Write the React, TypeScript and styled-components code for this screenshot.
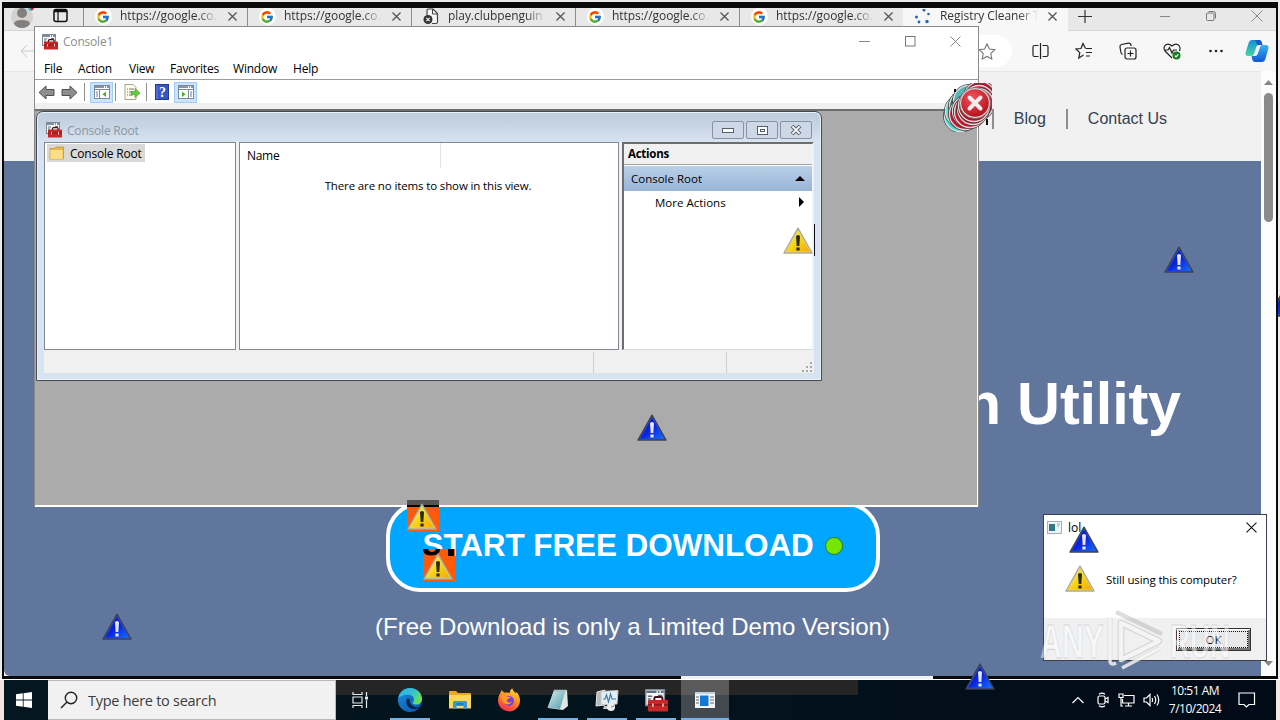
import React from 'react';
import styled, { createGlobalStyle } from 'styled-components';
import { FcGoogle } from 'react-icons/fc';

const GlobalStyle = createGlobalStyle`
  * { box-sizing: border-box; }
  body {
    margin: 0;
    overflow: hidden;
    font-family: 'Open Sans', 'Noto Sans', sans-serif;
    font-size: 11.5px;
    color: #000;
  }
  svg { display: block; flex: none; }
`;

interface PointProps {
  $x: number;
  $y: number;
}

/* ---------- icons ---------- */

const ToolboxIcon: React.FC<{ size?: number }> = ({ size = 16 }) => (
  <svg width={size} height={size} viewBox="0 0 16 16">
    <rect x="0.5" y="0.5" width="13" height="11" fill="#f4f6f8" stroke="#7c8894" />
    <path d="M1 2h12" stroke="#5c7083" strokeWidth="1.6" strokeDasharray="7 1 1 1" />
    <path d="M2 5h3M2 7h2M2 9h1M9 4.5h3" stroke="#5f6b76" />
    <path d="M6.5 8.5V6.6q0-1 1-1h3.6q1 0 1 1v1.9" fill="none" stroke="#3b1513" strokeWidth="1.3" />
    <path d="M2 8.400q0-.8.8-.8h12.400q.8 0 .8.8V15q0 .6-.6.6H2.600Q2 15.600 2 15z" fill="#c62828" />
    <path d="M2 11h14" stroke="#8b1414" />
    <path d="M5.500 10v2.400M12.500 10v2.400" stroke="#f3d6d0" />
  </svg>
);

const Warning: React.FC<{ blue?: boolean }> = ({ blue }) => (
  <svg width="32" height="30" viewBox="0 0 32 30">
    <defs>
      <linearGradient id="warnBlue" x1="0" y1="0" x2="1" y2="1">
        <stop offset="0" stopColor="#0713b8" />
        <stop offset=".5" stopColor="#0a22e0" />
        <stop offset="1" stopColor="#1272ff" />
      </linearGradient>
      <linearGradient id="warnYellow" x1="0" y1="0" x2="1" y2="1">
        <stop offset="0" stopColor="#fff27a" />
        <stop offset=".45" stopColor="#f7da1c" />
        <stop offset="1" stopColor="#f5a700" />
      </linearGradient>
    </defs>
    <path
      d="M16 2.200 30 27H2z"
      fill={blue ? '#3c4250' : '#b9b7ac'}
      stroke={blue ? '#3c4250' : '#a9a89f'}
      strokeWidth="1.4"
      strokeLinejoin="round"
    />
    <path
      d="M16 4.200 28.400 26H3.600z"
      fill={blue ? 'url(#warnBlue)' : 'url(#warnYellow)'}
      stroke={blue ? '#2b55d0' : '#ecd766'}
      strokeWidth=".7"
    />
    <path
      d="M14 10.500q0-1.500 2-1.500t2 1.500l-.7 9.500h-2.600zM14.400 21.500h3.200v3h-3.200z"
      fill={blue ? '#e6e6ff' : '#2c2a14'}
    />
  </svg>
);

const EdgeIcon: React.FC = () => (
  <svg width="24" height="24" viewBox="0 0 24 24">
    <defs>
      <linearGradient id="edgeTop" x1="0" y1="0" x2="1" y2=".5">
        <stop offset="0" stopColor="#2bb3e8" />
        <stop offset=".6" stopColor="#35c1d0" />
        <stop offset="1" stopColor="#66e05a" />
      </linearGradient>
      <linearGradient id="edgeSide" x1="0" y1="0" x2="1" y2="1">
        <stop offset="0" stopColor="#1b8fdd" />
        <stop offset="1" stopColor="#0b4fa8" />
      </linearGradient>
    </defs>
    <circle cx="12" cy="12" r="12" fill="url(#edgeSide)" />
    <path d="M.2 10.600C1.500 4 6.600 0 12 0c7 0 12 5.200 12 11 0 3.500-2.600 5.600-5.800 5.600-2.400 0-3.600-.8-3.600-1.600s1.400-1.300 1.400-3.400C16 8.700 13 6.800 9.200 6.800 5 6.800 1.600 8.600.2 10.600z" fill="url(#edgeTop)" />
    <path d="M9 10.500c-2 3.500 0 9.500 6 10.500 3 .4 5.600-.8 7.200-2.400-2 .8-4.800 1-7.200-.6C12 16.200 11 13.400 12 11.200z" fill="#06264e" />
  </svg>
);

const ExplorerIcon: React.FC = () => (
  <svg width="24" height="22" viewBox="0 0 24 22">
    <path d="M1 3q0-1 1-1h6l2 2h12q1 0 1 1v13H1z" fill="#e9a825" />
    <path d="M1 6h22v13.500H1z" fill="#ffd65c" />
    <path d="M5 20v-6.500q0-1.500 1.500-1.500h11q1.500 0 1.500 1.500V20h-3.500v-3h-7v3z" fill="#3a96d8" />
    <path d="M8.500 15h7" stroke="#1c6fb0" strokeWidth="1.5" />
  </svg>
);

const FirefoxIcon: React.FC = () => (
  <svg width="24" height="24" viewBox="0 0 24 24">
    <defs>
      <linearGradient id="fox" x1=".8" y1="0" x2=".3" y2="1">
        <stop offset="0" stopColor="#ffe23d" />
        <stop offset=".45" stopColor="#ff9020" />
        <stop offset="1" stopColor="#f4284f" />
      </linearGradient>
    </defs>
    <path d="M3 5.500C4 4 4.300 2.600 4.600 2c.8 1.200 1.700 2 2.900 2.800 1.700-.6 3.600-.5 5.200.2C12.900 3 13.800 1.200 15.300.2c.4 2.600 2.300 3.700 4 5.400 0-.6-.1-1.200-.3-1.800 2.700 2.200 4 5.500 4 8.600 0 6.300-5 11-11 11S1 18.700 1 12.600C1 10 1.800 7.300 3 5.500z" fill="url(#fox)" />
    <circle cx="12" cy="13" r="5" fill="#7b3fe0" />
    <path d="M4 7.500c2.500-1 5-.5 6.500 1.200l3 .3c-.5 1.800-2.800 1.700-3.600 2.800-.5 2.600 2.600 3.500 5 2-1.400 3.200-7.200 3.800-9.300-.5C4.500 11.500 4.200 9.500 4 7.500z" fill="#ff9a26" />
  </svg>
);

const NotepadIcon: React.FC = () => (
  <svg width="24" height="24" viewBox="0 0 24 24">
    <defs>
      <linearGradient id="pad" x1="0" y1="0" x2="1" y2="1">
        <stop offset="0" stopColor="#d7f0f2" />
        <stop offset="1" stopColor="#4f99a6" />
      </linearGradient>
    </defs>
    <path d="M8 2h13l1 16-5 4-15-2z" fill="#dfe3e3" />
    <path d="M8 2.500h11.500L14 21 1.500 19.500z" fill="url(#pad)" />
    <path d="M8 2.500h12" stroke="#9fb0b4" strokeWidth="2" strokeDasharray="1.500 1" />
  </svg>
);

const MonitorIcon: React.FC = () => (
  <svg width="24" height="24" viewBox="0 0 24 24">
    <path d="M2 4 10 2v15L1 18z" fill="#b4babd" stroke="#e6e6e6" />
    <path d="M6 3.500 23 2.500 22 16 6 17z" fill="#e6edf1" stroke="#c2c7ca" />
    <path d="M8 11h2l1.500-4 2 7 2-8 1.500 5h4" fill="none" stroke="#3c7fae" strokeWidth="1.200" />
    <path d="M9 18h7l1 3H8z" fill="#c5c9cb" />
    <circle cx="16" cy="19" r="4" fill="#ececec" />
    <path d="M16 19l3-1" stroke="#888" />
  </svg>
);

const AppWindowIcon: React.FC = () => (
  <svg width="20" height="16" viewBox="0 0 20 16">
    <rect width="20" height="16" fill="#f4f4f4" />
    <path d="M0 1h20" stroke="#bcd3e2" strokeWidth="2" />
    <rect x="5" y="3.500" width="8.500" height="10.500" fill="#1577d0" />
    <path d="M1 5h3M1 8h3M1 11h3M15 5h4M15 8h4M15 11h4" stroke="#606468" />
  </svg>
);

const CopilotIcon: React.FC = () => (
  <svg width="24" height="24" viewBox="0 0 24 24">
    <defs>
      <linearGradient id="coA" x1="0" y1="0" x2="0" y2="1">
        <stop offset="0" stopColor="#1590dc" />
        <stop offset="1" stopColor="#45d6a0" />
      </linearGradient>
      <linearGradient id="coB" x1="0" y1="0" x2="0" y2="1">
        <stop offset="0" stopColor="#38b3f2" />
        <stop offset="1" stopColor="#1257d6" />
      </linearGradient>
    </defs>
    <path d="M7 1h7q2 0 2.600 2l.8 3H14q-2 0-2.700 2L9 15q-.7 2-2.500 2H3q-3 0-2.400-3.500L3.600 4Q4.500 1 7 1z" fill="url(#coA)" />
    <path d="M14 1q2 0 2.700 2l.8 3h-5L11 3q-.5-2-2-2z" fill="#1c56c8" />
    <path d="M17 23h-7q-2 0-2.600-2l-.8-4H10q2 0 2.700-2L15 8q.7-2 2.500-2H21q3 0 2.400 3.500L20.400 20Q19.500 23 17 23z" fill="url(#coB)" />
  </svg>
);

/* ---------- desktop ---------- */

const Desktop = styled.div`
  position: relative;
  width: 1280px;
  height: 720px;
  overflow: hidden;
  background: #ececec;
`;

const Floating = styled.div<PointProps>`
  position: absolute;
  left: ${({ $x }) => $x}px;
  top: ${({ $y }) => $y}px;
`;

/* ---------- browser ---------- */

const Browser = styled.div`
  position: absolute;
  left: 2px;
  top: 2px;
  width: 1276px;
  height: 677px;
  display: flex;
  flex-direction: column;
  background: #f7f7f7;
  border: solid #0a0a0a;
  border-width: 6px 2px 3px;
`;

const TabStrip = styled.div`
  display: flex;
  height: 23px;
  background: #e8e8e8;
  border-bottom: 1px solid #d4d4d4;
  flex: none;
`;

const ProfileArea = styled.div`
  width: 79px;
  display: flex;
  align-items: flex-start;
  padding: 0 15px 0 7px;
  justify-content: space-between;
`;

const Tab = styled.div<{ $active?: boolean }>`
  width: ${({ $active }) => ($active ? 165 : 164)}px;
  height: ${({ $active }) => ($active ? 24 : 22)}px;
  display: flex;
  align-items: flex-start;
  padding-left: 11px;
  border-left: 1px solid ${({ $active }) => ($active ? '#f7f7f7' : '#8b8b8b')};
  background: ${({ $active }) => ($active ? '#f7f7f7' : 'transparent')};
`;

const TabIcon = styled.span`
  width: 16px;
  height: 17px;
  margin-right: 2px;
  display: flex;
  align-items: center;
  justify-content: center;
`;

const GoogleBadge = styled.span`
  width: 17px;
  height: 17px;
  flex: none;
  border-radius: 50%;
  background: #fff;
  display: flex;
  align-items: center;
  justify-content: center;
`;

const TabTitle = styled.span`
  width: 100px;
  margin-left: 7px;
  line-height: 16px;
  font-size: 12px;
  letter-spacing: -0.05px;
  white-space: nowrap;
  overflow: hidden;
  color: #333;
  mask-image: linear-gradient(90deg, #000 78%, transparent 98%);
`;

const TabClose = styled.span`
  margin: 4px 0 0 8px;
`;

const StripControls = styled.div`
  flex: 1;
  display: flex;
  align-items: flex-start;
  padding: 2px 13px 0 10px;
`;

const CaptionGroup = styled.div`
  margin-left: auto;
  display: flex;
  gap: 34px;
`;

const AddressRow = styled.div`
  height: 40px;
  flex: none;
  display: flex;
  align-items: center;
  padding: 0 7px 0 16px;
`;

const AddressPill = styled.div`
  width: 930px;
  height: 32px;
  margin-left: 48px;
  border-radius: 16px;
  background: #fff;
  display: flex;
  align-items: center;
  justify-content: flex-end;
  padding-right: 16px;
`;

const AddressTools = styled.div`
  margin-left: auto;
  display: flex;
  align-items: center;
  gap: 26px;
  > :last-child { margin-left: -6px; }
`;

const Viewport = styled.div`
  flex: 1;
  display: flex;
  min-height: 0;
`;

const Page = styled.div`
  width: 1257px;
  display: flex;
  flex-direction: column;
  font-family: 'Liberation Sans', Arial, sans-serif;
`;

const SiteHeader = styled.div`
  height: 90px;
  flex: none;
  background: #f1f1f1;
  border-top: 1px solid #e6e6e6;
  display: flex;
  align-items: center;
  justify-content: flex-end;
  padding: 4px 94px 0 0;
  font-size: 16px;
  color: #33414f;
`;

const NavLink = styled.span`
  padding: 0 20px;
  border-left: 2px solid #8e8e8e;
  line-height: 20px;
  &:last-child { padding-right: 0; }
`;

const Hero = styled.div`
  flex: 1;
  display: flex;
  flex-direction: column;
  align-items: center;
  background: #61769c;
  color: #fff;
  border-bottom-left-radius: 6px;
`;

const HeroTitle = styled.div`
  align-self: stretch;
  margin-top: 208px;
  padding-right: 80px;
  text-align: right;
  font-size: 59.5px;
  letter-spacing: -0.2px;
  line-height: 70px;
  font-weight: bold;
`;

const DownloadButton = styled.div`
  width: 494px;
  height: 90px;
  margin-top: 63px;
  border: 4px solid #fff;
  border-radius: 34px;
  background: #00a6ff;
  display: flex;
  align-items: center;
  justify-content: space-between;
  padding: 0 33px 3px 33px;
  font-size: 31.5px;
  font-weight: bold;
  letter-spacing: -0.1px;
  white-space: nowrap;
`;

const GreenDot = styled.i`
  width: 18px;
  height: 18px;
  border-radius: 50%;
  background: #76e500;
  border: 1px solid #2f7d2a;
`;

const HeroNote = styled.div`
  margin-top: 21px;
  font-size: 24px;
  line-height: 28px;
  white-space: nowrap;
`;

const ScrollTrack = styled.div`
  flex: 1;
  display: flex;
  flex-direction: column;
  align-items: center;
  justify-content: space-between;
  background: #fcfcfc;
  padding: 9px 0 10px;
`;

const ScrollThumb = styled.div`
  width: 9px;
  height: 129px;
  margin: 8px 0 auto;
  border-radius: 5px;
  background: #8b8b8b;
`;

/* ---------- management console ---------- */

const Console = styled.div`
  position: absolute;
  left: 34px;
  top: 26px;
  width: 945px;
  height: 481px;
  display: flex;
  flex-direction: column;
  background: #fff;
  border: 1px solid #8a8a8a;
  border-bottom: 0;
`;

const ConsoleTitle = styled.div`
  height: 29px;
  flex: none;
  display: flex;
  align-items: center;
  padding: 0 17px 0 7px;
  font-size: 12px;
  letter-spacing: -0.2px;
  color: #8d8d8d;
`;

const TitleText = styled.span`
  margin-left: 5px;
`;

const ConsoleCaption = styled.div`
  margin-left: auto;
  display: flex;
  gap: 34.5px;
`;

const MenuBar = styled.div`
  height: 24px;
  flex: none;
  display: flex;
  padding-left: 1px;
  border-bottom: 1px solid #9c9c9c;
`;

const MenuItem = styled.span<{ $width: number }>`
  width: ${({ $width }) => $width}px;
  padding-left: 8px;
  line-height: 25px;
  font-size: 12px;
  letter-spacing: -0.2px;
`;

const ToolBar = styled.div`
  height: 23px;
  flex: none;
  display: flex;
  align-items: center;
  padding: 1px 0 0 3px;
`;

const ToolSlot = styled.span<{ $width: number; $on?: boolean }>`
  width: ${({ $width }) => $width}px;
  height: 21px;
  display: flex;
  align-items: center;
  justify-content: center;
  background: ${({ $on }) => ($on ? '#cce4fb' : 'transparent')};
  border: 1px solid ${({ $on }) => ($on ? '#9fcdf5' : 'transparent')};
  &:last-child { margin-left: 5px; }
`;

const ToolDivider = styled.i<{ $gap: string }>`
  width: 1px;
  height: 18px;
  margin: ${({ $gap }) => $gap};
  background: #8f8f8f;
`;

const MdiArea = styled.div`
  flex: 1;
  margin-top: 6px;
  padding-left: 1px;
  background: #ababab;
  border: solid #fff;
  border-width: 0 1px 2px 0;
  border-top: 2px solid #6e6e6e;
  box-shadow: 0 -6px 0 #f0f0f0;
`;

const ChildWindow = styled.div`
  width: 786px;
  height: 270px;
  display: flex;
  flex-direction: column;
  padding: 0 7px 7px;
  border: 1px solid #454b52;
  border-radius: 7px 7px 0 0;
  background: linear-gradient(#bfccdb 0, #c6d3e2 12px, #d7e3f1 30px);
  box-shadow: inset 0 0 0 1px #e9f1f9;
`;

const ChildTitle = styled.div`
  height: 30px;
  flex: none;
  display: flex;
  align-items: center;
  padding: 6px 2px 0 2px;
  font-size: 12px;
  letter-spacing: -0.2px;
  color: #8b97a3;
`;

const ChildButtons = styled.div`
  margin-left: auto;
  display: flex;
  gap: 2px;
`;

const ChildButton = styled.span`
  width: 32px;
  height: 18px;
  display: flex;
  align-items: center;
  justify-content: center;
  border: 1px solid #8793a1;
  border-radius: 2px;
  background: #ccd8e6;
`;

const Panes = styled.div`
  height: 208px;
  flex: none;
  display: flex;
  gap: 3px;
  background: #f0f0f0;
`;

const TreePane = styled.div`
  width: 192px;
  border: 1px solid #828790;
  background: #fff;
  padding: 1px 2px;
`;

const TreeNode = styled.div`
  width: 98px;
  height: 18px;
  display: flex;
  align-items: center;
  background: #d9d9d9;
  padding-left: 2px;
  gap: 5px;
  font-size: 12px;
  letter-spacing: -0.22px;
  white-space: nowrap;
`;

const ListPane = styled.div`
  width: 380px;
  border: 1px solid #828790;
  background: #fff;
`;

const ListHeader = styled.div`
  width: 201px;
  height: 25px;
  padding-left: 7px;
  line-height: 26px;
  font-size: 12px;
  letter-spacing: -0.3px;
  border-right: 1px solid #e5e5e5;
`;

const EmptyNote = styled.div`
  padding: 9px 2px 0 0;
  text-align: center;
  line-height: 18px;
  letter-spacing: -0.13px;
`;

const ActionPane = styled.div`
  flex: 1;
  border: solid #6d6d6d;
  border-width: 2px 0 0 2px;
  border-right: 2px solid #eef3f8;
  border-bottom: 1px solid #d9d9d9;
  background: #fff;
`;

const ActionHeader = styled.div`
  height: 21px;
  padding-left: 4px;
  line-height: 20px;
  background: #f0f0f0;
  border-bottom: 1px solid #a0a0a0;
  font-weight: bold;
  letter-spacing: -0.25px;
`;

const ActionGroup = styled.div`
  height: 25px;
  margin-top: 1px;
  padding: 0 7px;
  display: flex;
  align-items: center;
  justify-content: space-between;
  background: linear-gradient(#bad0e8, #99b4d6);
`;

const ActionRow = styled.div`
  height: 22px;
  padding: 0 8px 0 31px;
  display: flex;
  align-items: center;
  justify-content: space-between;
`;

const StatusBar = styled.div`
  flex: 1;
  display: flex;
  align-items: flex-end;
  background: #f0f0f0;
`;

const StatusCell = styled.div<{ $width: number }>`
  width: ${({ $width }) => $width}px;
  height: 21px;
  border-right: 1px solid #d0d0d0;
`;

/* ---------- message box ---------- */

const Dialog = styled.div`
  position: absolute;
  left: 1043px;
  top: 514px;
  width: 224px;
  height: 147px;
  display: flex;
  flex-direction: column;
  border: 1px solid #3b424e;
  background: #fff;
`;

const DialogTitle = styled.div`
  height: 24px;
  display: flex;
  align-items: center;
  padding: 0 9px 0 3px;
  gap: 6px;
  font-size: 12px;
`;

const DialogClose = styled.span`
  margin-left: auto;
`;

const DialogBody = styled.div`
  flex: 1;
  display: flex;
  align-items: center;
  padding: 2px 0 1px 20px;
  gap: 10px;
  white-space: nowrap;
  letter-spacing: -0.12px;
`;

const DialogFooter = styled.div`
  height: 42px;
  display: flex;
  align-items: center;
  justify-content: flex-end;
  padding-right: 15px;
  background: #f0f0f0;
`;

const OkButton = styled.div`
  width: 75px;
  height: 23px;
  padding: 2px;
  border: 1px solid #333;
  background: #e9e9e9;
  box-shadow: inset 1px 1px 0 #fff, inset -2px -2px 0 #777;
`;

const OkFocus = styled.div`
  height: 17px;
  border: 1px dotted #111;
  text-align: center;
  line-height: 15px;
`;

/* ---------- leftovers painted over the screen ---------- */

const GlitchSquare = styled.div<PointProps & { $strip?: boolean }>`
  position: absolute;
  left: ${({ $x }) => $x}px;
  top: ${({ $y }) => $y}px;
  width: 32px;
  height: 32px;
  background: ${({ $strip }) =>
    $strip ? 'linear-gradient(#555 5px, #000 5px, #000 7px, #ff5a0a 7px)' : '#ff5a0a'};
`;

const BottomEdge = styled.div`
  position: absolute;
  left: 681px;
  top: 676px;
  width: 252px;
  height: 4px;
  background: #eef1f6;
`;

const BottomLine = styled.div`
  position: absolute;
  left: 0;
  top: 679px;
  width: 1280px;
  height: 1px;
  background: #fff;
`;

const CaretLine = styled.div`
  position: absolute;
  left: 814px;
  top: 224px;
  width: 1px;
  height: 32px;
  background: #111;
`;

/* ---------- taskbar ---------- */

const Taskbar = styled.div`
  position: absolute;
  left: 4px;
  top: 680px;
  width: 1272px;
  height: 40px;
  display: flex;
  background: linear-gradient(90deg, #04161f 0, #03121c 60%, #020a18 100%);
  box-shadow: 0 0 0 4px #f3e6e2;
  clip-path: inset(0 -4px 0 -4px);
  color: #fff;
`;

const StartButton = styled.div`
  width: 44px;
  display: flex;
  align-items: center;
  justify-content: center;
  padding-right: 4px;
`;

const SearchBox = styled.div`
  width: 288px;
  display: flex;
  align-items: center;
  padding-left: 12px;
  gap: 10px;
  background: #f1f1f1;
  border: 1px solid #b9b9b9;
  border-left: 0;
  color: #3c3c3c;
  font-size: 14.5px;
  letter-spacing: -0.27px;
`;

const TaskButtons = styled.div`
  width: 522px;
  display: flex;
  background: linear-gradient(#262525 15px, transparent 15px);
`;

const TaskButton = styled.div<{ $width: number; $running?: boolean; $active?: boolean }>`
  width: ${({ $width }) => $width}px;
  display: flex;
  flex-direction: column;
  align-items: center;
  justify-content: center;
  background: ${({ $active }) => ($active ? 'linear-gradient(#5a5a5a 15px, #42494f 15px)' : 'transparent')};
  position: relative;
  &::after {
    content: '';
    position: absolute;
    bottom: 0;
    width: ${({ $active }) => ($active ? 48 : 40)}px;
    height: ${({ $running }) => ($running ? 2 : 0)}px;
    background: #76b2e8;
  }
`;

const Tray = styled.div`
  margin-left: auto;
  display: flex;
  align-items: center;
  padding-right: 20px;
`;

const TrayIcons = styled.div`
  display: flex;
  align-items: center;
  gap: 8px;
  > :first-child { margin-right: 3px; }
`;

const Clock = styled.div`
  width: 70px;
  margin: 0 8px 0 0;
  text-align: center;
  line-height: 18px;
  font-size: 12px;
  letter-spacing: -0.5px;
`;

const Cross: React.FC<{ size: number; color: string; width?: number }> = ({ size, color, width = 1 }) => (
  <svg width={size} height={size} viewBox="0 0 10 10">
    <path d="M.5.5l9 9M9.500.5l-9 9" stroke={color} strokeWidth={(width * 10) / size} />
  </svg>
);

const tabs = [
  { title: 'https://google.co.', google: true },
  { title: 'https://google.co.', google: true },
  { title: 'play.clubpenguin.c', google: false },
  { title: 'https://google.co.', google: true },
  { title: 'https://google.co.', google: true },
];

const menus = [
  { label: 'File', width: 34 },
  { label: 'Action', width: 51 },
  { label: 'View', width: 41 },
  { label: 'Favorites', width: 63 },
  { label: 'Window', width: 60 },
  { label: 'Help', width: 41 },
];

const blueMarks = [
  [1163, 245],
  [636, 413],
  [101, 612],
  [1068, 525],
  [964, 662],
];

// older copies of the error badge, drawn from back to front
const trail = [
  { x: 17, y: 33, c: '#44e0dc' },
  { x: 20, y: 30, c: '#1d4a4c' },
  { x: 18, y: 28, c: '#58dcd8' },
  { x: 22, y: 23, c: '#2f6c6c' },
  { x: 26, y: 18, c: '#53b8b6' },
  { x: 22, y: 31, c: '#c4142c' },
  { x: 37, y: 14, c: '#c4142c' },
  { x: 25, y: 28, c: '#8e2a38' },
  { x: 36, y: 18, c: '#b8283a' },
  { x: 27, y: 29, c: '#d0142a' },
  { x: 35, y: 21, c: '#b8283a' },
  { x: 30, y: 26, c: '#c4142c' },
  { x: 31, y: 23, c: '#a81628' },
];

const BrowserWindow: React.FC = () => (
  <Browser>
    <TabStrip>
      <ProfileArea>
        <svg width="26" height="21" viewBox="0 0 26 21">
          <circle cx="11" cy="9" r="11" fill="#d5d3d1" />
          <circle cx="11" cy="5" r="5" fill="#82807f" />
          <path d="M3 16q0-4 8-4t8 4q-3 4-8 4t-8-4z" fill="#82807f" />
          <circle cx="20" cy="0" r="2.800" fill="#15d9c8" />
          <path d="M19 0h4q-.5 2.500-3 2.300z" fill="#e21850" />
        </svg>
        <svg width="15" height="15" viewBox="0 0 15 15">
          <rect x="1" y="1.500" width="13" height="12" rx="2" fill="none" stroke="#111" strokeWidth="1.500" />
          <path d="M1 3h13" stroke="#111" strokeWidth="2.500" />
          <path d="M5 3v10" stroke="#111" strokeWidth="1.200" />
        </svg>
      </ProfileArea>
      {tabs.map((tab, index) => (
        <Tab key={index}>
          <TabIcon>
            {tab.google ? (
              <GoogleBadge><FcGoogle size={14} /></GoogleBadge>
            ) : (
              <svg width="16" height="17" viewBox="0 0 16 17">
                <path d="M4 7V2.500Q4 1 5.500 1H10l4.500 4.500V14q0 1.500-1.500 1.500H9" fill="#f5f5f5" stroke="#444" strokeWidth="1.200" />
                <path d="M9.500 1v5h5" fill="none" stroke="#444" />
                <circle cx="5" cy="11.500" r="4.500" fill="#333" />
                <path d="M3.300 9.800l3.400 3.400M6.700 9.800l-3.400 3.400" stroke="#eee" strokeWidth="1.200" />
              </svg>
            )}
          </TabIcon>
          <TabTitle>{tab.title}</TabTitle>
          <TabClose><Cross size={9} color="#555" width={1.300} /></TabClose>
        </Tab>
      ))}
      <Tab $active>
        <TabIcon>
          <svg width="16" height="16" viewBox="0 0 16 16" fill="#1b68b3">
            <circle cx="9" cy="1" r="1.500" />
            <circle cx="13.500" cy="5" r="1.300" />
            <circle cx="1.500" cy="8" r="1.500" />
            <circle cx="4" cy="13" r="1.400" />
            <circle cx="12" cy="12.500" r="1.700" />
          </svg>
        </TabIcon>
        <TabTitle>Registry Cleaner To</TabTitle>
        <TabClose><Cross size={9} color="#555" width={1.300} /></TabClose>
      </Tab>
      <StripControls>
        <svg width="14" height="13" viewBox="0 0 14 13">
          <path d="M7 0v13M0 6.500h14" stroke="#333" strokeWidth="1.200" />
        </svg>
        <CaptionGroup>
          <svg width="12" height="13" viewBox="0 0 12 13"><path d="M1 6.500h10" stroke="#888" /></svg>
          <svg width="12" height="12" viewBox="0 0 12 12" fill="none" stroke="#777">
            <rect x="1.500" y="3" width="7.500" height="7.500" rx="1" />
            <path d="M3.500 1.500h5q2 0 2 2v5" />
          </svg>
          <Cross size={12} color="#888" />
        </CaptionGroup>
      </StripControls>
    </TabStrip>
    <AddressRow>
      <svg width="14" height="12" viewBox="0 0 14 12" fill="none" stroke="#c9c9c9">
        <path d="M14 6H1M7 0L1 6l6 6" />
      </svg>
      <AddressPill>
        <svg width="18" height="17" viewBox="0 0 18 17" fill="none" stroke="#777" strokeWidth="1.100">
          <path d="M9 1l2.400 5 5.400.7-4 3.800 1 5.500L9 13.400 4.200 16l1-5.500-4-3.800L6.600 6z" />
        </svg>
      </AddressPill>
      <AddressTools>
        <svg width="17" height="18" viewBox="0 0 17 18" fill="none" stroke="#222" strokeWidth="1.200">
          <path d="M8.500 1v16M6.500 3.500H2.500Q1 3.500 1 5v8q0 1.500 1.500 1.500h4M10.500 3.500h4Q16 3.500 16 5v8q0 1.500-1.500 1.500h-4" />
        </svg>
        <svg width="18" height="18" viewBox="0 0 18 18" fill="none" stroke="#222" strokeWidth="1.200">
          <path d="M10.500 6.500L8 1.500 6 6.500 1 7l3.800 3.600L3.800 16 8.500 13M11 6.500h6M11 10.500h6M11 14h4" />
        </svg>
        <svg width="18" height="18" viewBox="0 0 18 18" fill="none" stroke="#222" strokeWidth="1.200">
          <rect x="6" y="6" width="11" height="11" rx="2" />
          <path d="M11.500 8.500v6M8.500 11.500h6M3.500 12.500Q2 11.500 1.700 9.500L1 5Q.8 3 2.500 2.500L9.500 1.200Q11.500 1 12 3v1" />
        </svg>
        <svg width="18" height="18" viewBox="0 0 18 18" fill="none" stroke="#222" strokeWidth="1.200">
          <path d="M9 16L2 9Q0 6 2 3.500 5 .5 9 4q4-3.500 7-.5 1.800 2.500.5 5.500M1 8h4l1.500-2.500L9 11l1.500-3H14" />
          <circle cx="13.500" cy="13.500" r="4" fill="#15801f" stroke="none" />
          <path d="M11.800 13.600l1.300 1.200 2.200-2.500" stroke="#fff" />
        </svg>
        <svg width="18" height="4" viewBox="0 0 18 4" fill="#222">
          <circle cx="3.500" cy="2" r="1.300" />
          <circle cx="9" cy="2" r="1.300" />
          <circle cx="14.500" cy="2" r="1.300" />
        </svg>
        <CopilotIcon />
      </AddressTools>
    </AddressRow>
    <Viewport>
      <Page>
        <SiteHeader>
          <NavLink>Blog</NavLink>
          <NavLink>Contact Us</NavLink>
        </SiteHeader>
        <Hero>
          <HeroTitle>n Utility</HeroTitle>
          <DownloadButton>
            START FREE DOWNLOAD
            <GreenDot />
          </DownloadButton>
          <HeroNote>(Free Download is only a Limited Demo Version)</HeroNote>
        </Hero>
      </Page>
      <ScrollTrack>
        <svg width="9" height="5" viewBox="0 0 9 5"><path d="M0 5L4.500 0 9 5z" fill="#858585" /></svg>
        <ScrollThumb />
        <svg width="9" height="5" viewBox="0 0 9 5"><path d="M0 0l4.500 5L9 0z" fill="#858585" /></svg>
      </ScrollTrack>
    </Viewport>
  </Browser>
);

const PanelGlyph: React.FC<{ flip?: boolean }> = ({ flip }) => (
  <svg width="16" height="14" viewBox="0 0 16 14">
    <rect x=".5" y=".5" width="15" height="13" fill="#fff" stroke="#7b8a99" />
    <path d="M1 2h14" stroke="#8796a5" strokeWidth="2" strokeDasharray="9 1 1 1" />
    <path d="M0 4.500h16" stroke="#7b8a99" />
    <path d={flip ? 'M10.500 5v9' : 'M5.500 5v9'} stroke="#7b8a99" />
    <path d={flip ? 'M12 7h2M12 9h2M12 11h2' : 'M2 7h2M2 9h2M2 11h2'} stroke="#6c7c8c" />
    <path d={flip ? 'M4 6.500l3.500 2.700L4 12z' : 'M12 6.500L8.500 9.200 12 12z'} fill="#45b11c" />
  </svg>
);

const ArrowGlyph: React.FC<{ flip?: boolean }> = ({ flip }) => (
  <svg width="17" height="15" viewBox="0 0 17 15">
    <path
      d={flip ? 'M16 7.500L9 1v3.500H1v6h8V14z' : 'M1 7.500L8 1v3.500h8v6H8V14z'}
      fill="#8d8d8d"
      stroke="#4f4f4f"
      strokeLinejoin="round"
    />
  </svg>
);

const ConsoleWindow: React.FC = () => (
  <Console>
    <ConsoleTitle>
      <ToolboxIcon />
      <TitleText>Console1</TitleText>
      <ConsoleCaption>
        <svg width="11" height="11" viewBox="0 0 11 11"><path d="M0 5.500h11" stroke="#8a8a8a" /></svg>
        <svg width="11" height="11" viewBox="0 0 11 11"><rect x=".5" y=".5" width="9.500" height="9.500" fill="none" stroke="#777" /></svg>
        <Cross size={11} color="#888" />
      </ConsoleCaption>
    </ConsoleTitle>
    <MenuBar>
      {menus.map((menu) => (
        <MenuItem key={menu.label} $width={menu.width}>{menu.label}</MenuItem>
      ))}
    </MenuBar>
    <ToolBar>
      <ToolSlot $width={17}><ArrowGlyph /></ToolSlot>
      <ToolSlot $width={29}><ArrowGlyph flip /></ToolSlot>
      <ToolDivider $gap="0 5px 0 0" />
      <ToolSlot $width={23} $on><PanelGlyph /></ToolSlot>
      <ToolDivider $gap="0 8px 0 2px" />
      <ToolSlot $width={16}>
        <svg width="16" height="16" viewBox="0 0 16 16">
          <path d="M1 .5h8l3 3v12H1z" fill="#fffdf2" stroke="#a9a08c" />
          <path d="M3 5h1M3 8h1M3 11h1M5 5h5M5 8h4M5 11h4" stroke="#7a7468" />
          <path d="M7 7.500h4V4.500L16 9l-5 4.500v-3H7z" fill="#62cc3c" stroke="#3f9f23" strokeWidth=".6" />
        </svg>
      </ToolSlot>
      <ToolDivider $gap="0 8px 0 6px" />
      <ToolSlot $width={14}>
        <svg width="14" height="16" viewBox="0 0 14 16">
          <rect x=".5" y=".5" width="13" height="15" fill="#3557c4" stroke="#213a8c" />
          <path d="M2 1v14" stroke="#6d87e0" />
          <text x="7.500" y="13" fill="#fff" fontSize="14" fontFamily="Liberation Serif, serif" fontWeight="bold" textAnchor="middle">?</text>
        </svg>
      </ToolSlot>
      <ToolSlot $width={23} $on><PanelGlyph flip /></ToolSlot>
    </ToolBar>
    <MdiArea>
      <ChildWindow>
        <ChildTitle>
          <ToolboxIcon />
          <TitleText>Console Root</TitleText>
          <ChildButtons>
            <ChildButton>
              <svg width="12" height="5" viewBox="0 0 12 5"><rect x=".5" y=".5" width="11" height="4" fill="#fff" stroke="#555f6b" /></svg>
            </ChildButton>
            <ChildButton>
              <svg width="11" height="9" viewBox="0 0 11 9">
                <rect x=".5" y=".5" width="10" height="8" fill="#fff" stroke="#555f6b" />
                <rect x="3.500" y="3.500" width="4" height="2" fill="#fff" stroke="#555f6b" />
              </svg>
            </ChildButton>
            <ChildButton>
              <svg width="12" height="10" viewBox="0 0 12 10">
                <path d="M2 1l8 8M10 1L2 9" stroke="#555f6b" strokeWidth="3.800" />
                <path d="M2.400 1.400l7.200 7.200M9.600 1.400L2.400 8.600" stroke="#fff" strokeWidth="1.800" />
              </svg>
            </ChildButton>
          </ChildButtons>
        </ChildTitle>
        <Panes>
          <TreePane>
            <TreeNode>
              <svg width="16" height="14" viewBox="0 0 16 14">
                <path d="M1 2.500h5l1-1.500h7.500v12H1z" fill="#e5b94e" stroke="#c69632" strokeWidth=".8" />
                <path d="M1.400 4h12.200v9H1.400z" fill="#fbdf86" />
              </svg>
              Console Root
            </TreeNode>
          </TreePane>
          <ListPane>
            <ListHeader>Name</ListHeader>
            <EmptyNote>There are no items to show in this view.</EmptyNote>
          </ListPane>
          <ActionPane>
            <ActionHeader>Actions</ActionHeader>
            <ActionGroup>
              Console Root
              <svg width="10" height="5" viewBox="0 0 10 5"><path d="M0 5l5-5 5 5z" /></svg>
            </ActionGroup>
            <ActionRow>
              More Actions
              <svg width="5" height="10" viewBox="0 0 5 10"><path d="M0 0l5 5-5 5z" /></svg>
            </ActionRow>
          </ActionPane>
        </Panes>
        <StatusBar>
          <StatusCell $width={550} />
          <StatusCell $width={133} />
          <svg width="86" height="12" viewBox="0 0 86 12" fill="#a9a9a9">
            <path d="M83 1h2v2h-2zM83 5h2v2h-2zM83 9h2v2h-2zM79 5h2v2h-2zM79 9h2v2h-2zM75 9h2v2h-2z" />
          </svg>
        </StatusBar>
      </ChildWindow>
    </MdiArea>
  </Console>
);

const MessageBox: React.FC = () => (
  <Dialog>
    <DialogTitle>
      <svg width="15" height="13" viewBox="0 0 15 13">
        <rect x=".5" y=".5" width="14" height="12" fill="#eef3f5" stroke="#9eb0ba" />
        <rect x="2" y="3" width="6" height="7" fill="#2d7a86" />
        <path d="M10 3h3M10 5h2" stroke="#8aa" />
      </svg>
      lol
      <DialogClose><Cross size={11} color="#111" width={1.100} /></DialogClose>
    </DialogTitle>
    <DialogBody>
      <Warning />
      Still using this computer?
    </DialogBody>
    <DialogFooter>
      <OkButton><OkFocus>OK</OkFocus></OkButton>
    </DialogFooter>
  </Dialog>
);

const Watermark: React.FC = () => (
  <svg width="196" height="64" viewBox="0 0 196 64" fontFamily="Liberation Sans, Arial, sans-serif" fontWeight="bold">
    <g fill="#fff" fillOpacity=".5" stroke="#8a8a8a" strokeOpacity=".3" strokeWidth=".8">
      <text x="2" y="50" fontSize="49" textLength="64" lengthAdjust="spacingAndGlyphs">ANY</text>
      <text x="132" y="50" fontSize="49" textLength="60" lengthAdjust="spacingAndGlyphs">RUN</text>
    </g>
    <g fill="none" strokeLinejoin="round">
      <g stroke="#8a8a8a" strokeOpacity=".28">
        <path d="M83 15v37l38-19z" strokeWidth="6.500" />
        <path d="M72 9v43q0 6 6 3M78 4l46 22M84 60l38-20" strokeWidth="4.500" />
      </g>
      <g stroke="#fff" strokeOpacity=".75">
        <path d="M83 15v37l38-19z" strokeWidth="4.500" />
        <path d="M72 9v43q0 6 6 3M84 60l38-20" strokeWidth="3.500" />
      </g>
    </g>
  </svg>
);

const ErrorTrail: React.FC = () => (
  <svg width="49" height="49" viewBox="0 0 49 49">
    <defs>
      <radialGradient id="errRed" cx=".4" cy=".3" r=".8">
        <stop offset="0" stopColor="#f0525a" />
        <stop offset="1" stopColor="#b30a18" />
      </radialGradient>
    </defs>
    {trail.map((dot, index) => (
      <g key={index}>
        <circle cx={dot.x} cy={dot.y} r="16.500" fill={dot.c} stroke="#333" strokeWidth=".8" />
        <circle cx={dot.x} cy={dot.y} r="15.500" fill="none" stroke="#dcdcdc" strokeWidth="1.300" />
      </g>
    ))}
    <circle cx="32" cy="20" r="15.500" fill="#d8d8d8" stroke="#666" strokeWidth=".7" />
    <circle cx="32" cy="20" r="13.800" fill="url(#errRed)" />
    <path d="M26.500 14.500l11 11M37.500 14.500l-11 11" stroke="#f4ecec" strokeWidth="4" strokeLinecap="round" />
    <path d="M11 6h2v3h-2zM43 36h2v6h-2z" fill="#111" />
  </svg>
);

const SystemTaskbar: React.FC = () => (
  <Taskbar>
    <StartButton>
      <svg width="16" height="16" viewBox="0 0 16 16" fill="#fff">
        <path d="M0 2.300L6.800 1.300v6.300H0zM7.600 1.200L16 0v7.600H7.600zM0 8.400h6.800v6.300L0 13.700zM7.600 8.400H16V16l-8.400-1.200z" />
      </svg>
    </StartButton>
    <SearchBox>
      <svg width="18" height="18" viewBox="0 0 18 18" fill="none" stroke="#222" strokeWidth="1.400">
        <circle cx="11" cy="7" r="5.700" />
        <path d="M7 11l-6 6" />
      </svg>
      Type here to search
    </SearchBox>
    <TaskButtons>
      <TaskButton $width={49}>
        <svg width="17" height="16" viewBox="0 0 17 16" fill="none" stroke="#e8e8e8" strokeWidth="1.200">
          <path d="M1 0v2.500h9V0M1 16v-2.500h9V16M1 5h9v6H1zM14.500 0v4M14.500 8v8" />
          <path d="M13 6h3" strokeWidth="3" />
        </svg>
      </TaskButton>
      <TaskButton $width={50} $running><EdgeIcon /></TaskButton>
      <TaskButton $width={49}><ExplorerIcon /></TaskButton>
      <TaskButton $width={49}><FirefoxIcon /></TaskButton>
      <TaskButton $width={49} $running><NotepadIcon /></TaskButton>
      <TaskButton $width={49} $running><MonitorIcon /></TaskButton>
      <TaskButton $width={50} $running><ToolboxIcon size={23} /></TaskButton>
      <TaskButton $width={48} $running $active><AppWindowIcon /></TaskButton>
    </TaskButtons>
    <Tray>
      <TrayIcons>
        <svg width="14" height="14" viewBox="0 0 14 14" fill="none" stroke="#fff" strokeWidth="1.200">
          <path d="M1.500 10L7 4.500l5.500 5.500" />
        </svg>
        <svg width="14" height="16" viewBox="0 0 14 16" fill="none" stroke="#fff" strokeWidth="1.200">
          <rect x="2" y="4" width="7" height="8" rx="1.500" />
          <path d="M9 7l3-1.500v5L9 9M3 2.200Q6 0 9 2.200M3 13.800Q6 16 9 13.800" />
        </svg>
        <svg width="17" height="14" viewBox="0 0 17 14" fill="none" stroke="#fff" strokeWidth="1.200">
          <path d="M6 2.500h10v7.500H4.500V6M10.500 10v3M7 13h7" />
          <path d="M1 1h4v3.500H1zM3 4.500V13h2" />
        </svg>
        <svg width="17" height="14" viewBox="0 0 17 14" fill="none" stroke="#fff" strokeWidth="1.200">
          <path d="M1 5h2.500L7 1.500v11L3.500 9H1zM9 5q1.200 2 0 4M11.500 3q2.500 4 0 8M14 1.500q3.500 5.500 0 11" />
        </svg>
      </TrayIcons>
      <Clock>
        <div>10:51 AM</div>
        <div>7/10/2024</div>
      </Clock>
      <svg width="18" height="18" viewBox="0 0 18 18" fill="none" stroke="#fff" strokeWidth="1.200">
        <path d="M1 2h15.500v11.500H11L8.500 16 6 13.500H1z" />
      </svg>
    </Tray>
  </Taskbar>
);

const App: React.FC = () => (
  <Desktop>
    <GlobalStyle />
    <Floating $x={1267} $y={289}><Warning blue /></Floating>
    <BrowserWindow />
    <BottomEdge />
    <ConsoleWindow />
    <SystemTaskbar />
    <BottomLine />
    <CaretLine />
    <Floating $x={782} $y={226}><Warning /></Floating>
    <GlitchSquare $x={407} $y={500} $strip />
    <Floating $x={406} $y={502}><Warning /></Floating>
    <GlitchSquare $x={423} $y={549}>
      <svg width="32" height="8" viewBox="0 0 32 8">
        <path d="M0 0h5q1 3 4 3t4-3h4q0 6-8.500 6.500Q1.500 6.500 0 2zM25 0h6v7h-6z" fill="#000" />
      </svg>
    </GlitchSquare>
    <Floating $x={422} $y={552}><Warning /></Floating>
    <Floating $x={943} $y={83}><ErrorTrail /></Floating>
    <MessageBox />
    <Floating $x={1038} $y={608}><Watermark /></Floating>
    {blueMarks.map(([x, y]) => (
      <Floating key={`${x}-${y}`} $x={x} $y={y}><Warning blue /></Floating>
    ))}
  </Desktop>
);

export default App;
